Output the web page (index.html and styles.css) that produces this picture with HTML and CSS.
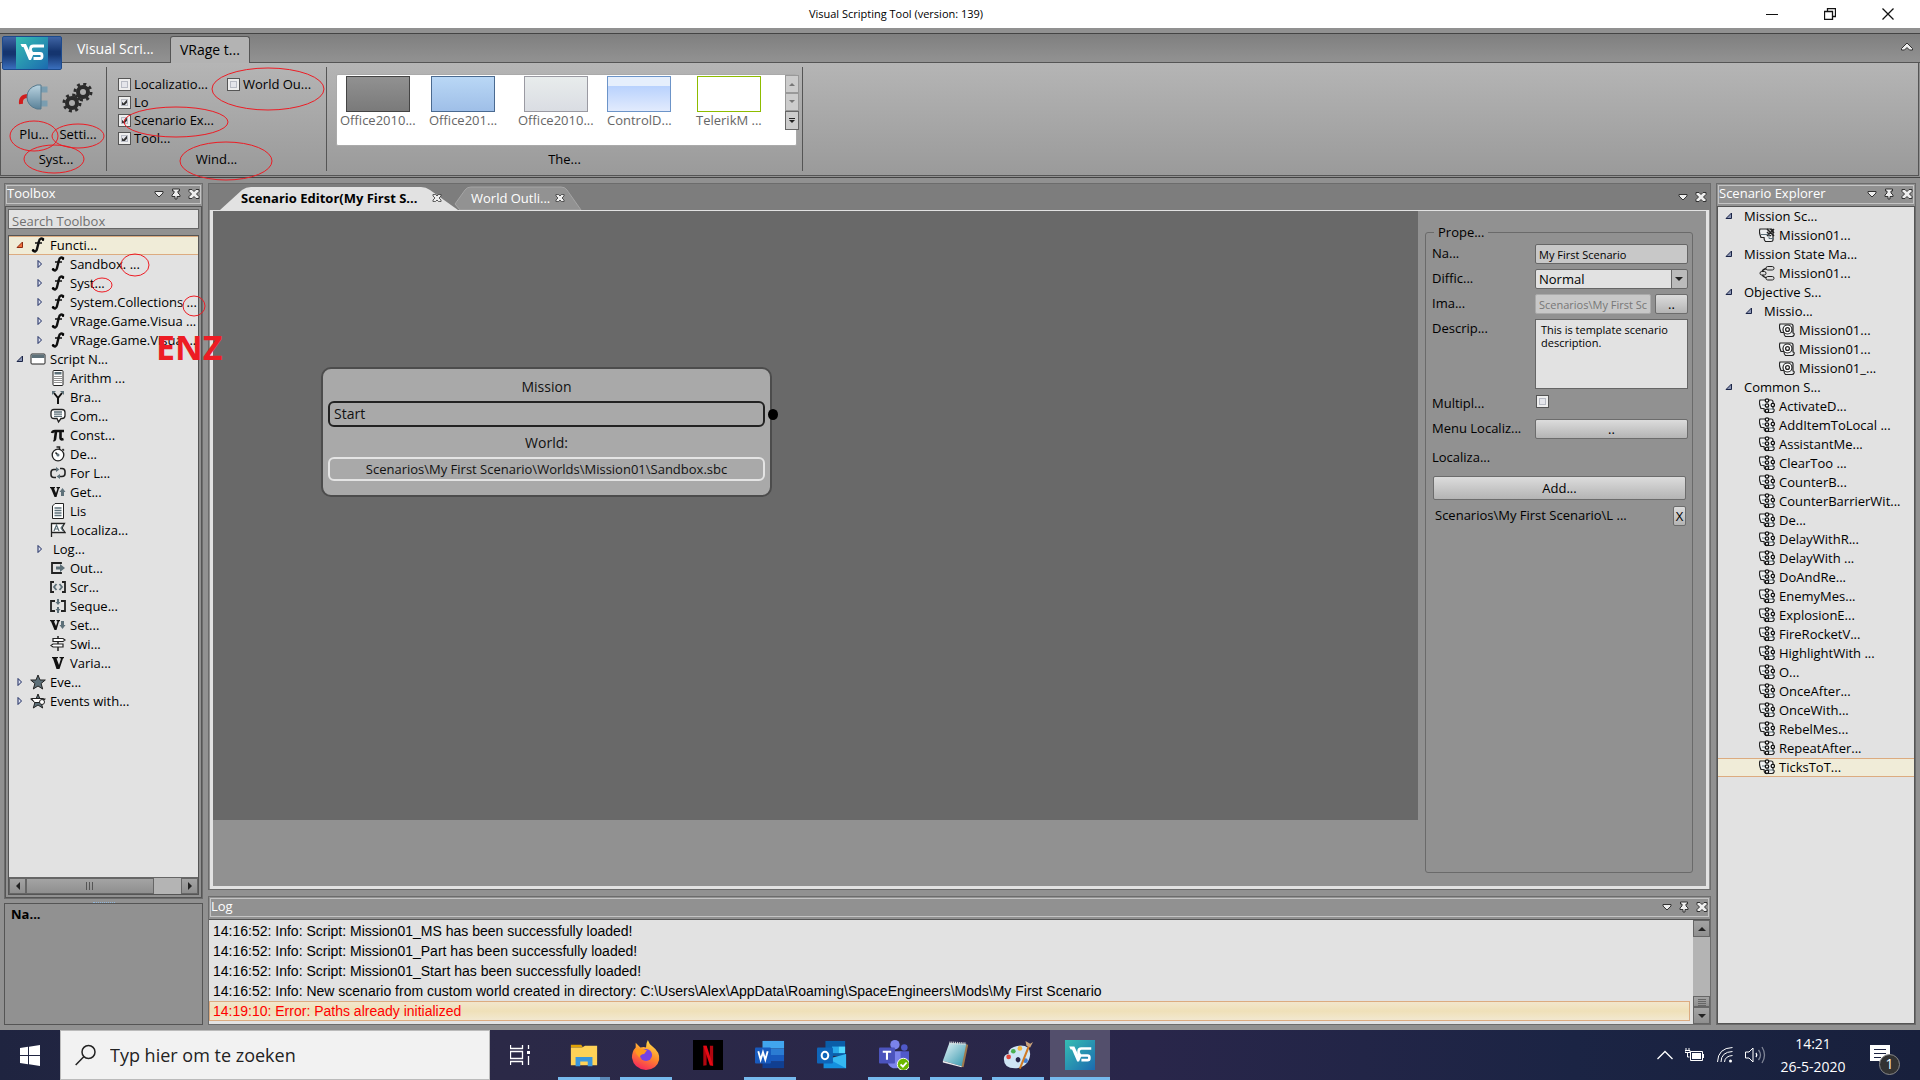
FILE: index.html
```html
<!DOCTYPE html>
<html lang="en">
<head>
<meta charset="utf-8">
<title>Visual Scripting Tool</title>
<link rel="stylesheet" href="styles.css">
</head>
<body>
<svg class="defs" aria-hidden="true">
  <defs>
    <linearGradient id="vsg" x1="0" y1="0" x2="1" y2="1"><stop offset="0" stop-color="#35bdb2"/><stop offset="1" stop-color="#1c6bb0"/></linearGradient>
    <linearGradient id="ffg" x1="0.7" y1="0" x2="0.3" y2="1"><stop offset="0" stop-color="#ffe14a"/><stop offset="0.5" stop-color="#ff8a2a"/><stop offset="1" stop-color="#f5225f"/></linearGradient>
    <linearGradient id="ntg" x1="0" y1="0" x2="1" y2="1"><stop offset="0" stop-color="#e6f5f8"/><stop offset="1" stop-color="#2f94ab"/></linearGradient>
    <linearGradient id="plg" x1="0" y1="0" x2="0" y2="1"><stop offset="0" stop-color="#b9d3e0"/><stop offset="1" stop-color="#5b8299"/></linearGradient>
  </defs>
  <symbol id="vs" viewBox="0 0 32 32"><rect width="32" height="32" fill="url(#vsg)"/><path d="M4.500 7H10l4.500 9.500L16 13l1.500 4-2.500 6h-2L7.500 10H6z" fill="#fff"/><path d="M28 9H17.500q-3 0-3 3v1.500q0 3 3 3H24q2 0 2 2v1q0 2-2 2h-6.500" fill="none" stroke="#fff" stroke-width="2.800"/></symbol>
  <symbol id="down" viewBox="0 0 10 10"><path d="M1 2.500h8v1.500L5 8 1 4z" fill="#eee" stroke="#333"/></symbol>
  <symbol id="pin" viewBox="0 0 10 12"><path d="M1.500 1h7v2H7v2l2 2v1.500H6v2.500H4V8.500H1V7l2-2V3H1.500z" fill="#eee" stroke="#333"/></symbol>
  <symbol id="close" viewBox="0 0 12 10"><path d="M1 .5h3l2 2 2-2h3v2L8.500 5 11 7.500v2H8l-2-2-2 2H1v-2L3.500 5 1 2.500z" fill="#eee" stroke="#333"/></symbol>
  <symbol id="open" viewBox="0 0 8 8"><path d="M6.500 1v5.500H1z" fill="#8d97b5" stroke="#1a2447"/></symbol>
  <symbol id="openred" viewBox="0 0 8 8"><path d="M6.500 1v5.500H1z" fill="#f0703a" stroke="#8e2a12"/></symbol>
  <symbol id="shut" viewBox="0 0 8 8"><path d="M2 .5v7L5.500 4z" fill="#dfe3f2" stroke="#16245c"/></symbol>
  <symbol id="fn" viewBox="0 0 16 16"><path d="M13.500 2.500C12 .5 9.500 1.500 9 4L7 12c-.5 2.500-2.500 3.200-4 1.500" fill="none" stroke="#111" stroke-width="2.400"/><path d="M5 6h7" stroke="#111" stroke-width="1.500"/><circle cx="13" cy="2.700" r="1.200"/><circle cx="3.200" cy="13.300" r="1.300"/></symbol>
  <symbol id="window" viewBox="0 0 16 16"><rect x="1" y="3" width="14" height="10" rx="1" fill="#fff" stroke="#222"/><path d="M1.500 3.500h13V7h-13z" fill="#5d7079"/></symbol>
  <symbol id="calc" viewBox="0 0 16 16"><rect x="3" y=".5" width="10" height="15" rx="1" fill="#fff" stroke="#222"/><path d="M4.500 2h7v2.500h-7z" fill="#5d7079"/><path d="M5 6v8M7 6v8M9 6v8M11 6v8" stroke="#222" stroke-dasharray="1 1"/></symbol>
  <symbol id="branch" viewBox="0 0 16 16"><path d="M8 15V9L4 4M8 9l4-5" fill="none" stroke="#111" stroke-width="2"/><path d="M2 2h4L2 6zM14 2h-4l4 4z" fill="#5d7079"/></symbol>
  <symbol id="comment" viewBox="0 0 16 16"><path d="M4 1.500h8q3 0 3 3v3q0 3-3 3h-1L8.500 14 7 10.500H4q-3 0-3-3v-3q0-3 3-3z" fill="#fff" stroke="#222" stroke-width="1.300"/><path d="M4 4h8M4 6.200h8M4 8.400h8" stroke="#5d7079" stroke-width="1.300"/></symbol>
  <symbol id="pi" viewBox="0 0 16 16"><path d="M2 6q.5-2 3-2h9M6 4.500 5 12q-.3 1.500-1.500 1M10.500 4.500V11q0 2 3 1" fill="none" stroke="#111" stroke-width="2.600"/></symbol>
  <symbol id="timer" viewBox="0 0 16 16"><circle cx="8" cy="9" r="5.800" fill="#fff" stroke="#222" stroke-width="1.300"/><path d="M6.500 1h3v2M12.500 3l1.500 1.500M8 9 5.500 6.500" stroke="#222" stroke-width="1.500" fill="none"/><circle cx="8" cy="9" r="1.500" fill="#5d7079"/></symbol>
  <symbol id="loop" viewBox="0 0 16 16"><path d="M6 12.500H4q-3 0-3-3v-2q0-3 3-3h3M10 3.500h2q3 0 3 3v2q0 3-3 3H9" fill="none" stroke="#222" stroke-width="1.600"/><path d="M6 2l3.500 2.500L6 7zM10 9l-3.500 2.500L10 14z" fill="#5d7079"/></symbol>
  <symbol id="getv" viewBox="0 0 16 16"><path d="M0 3h5v1l-1 .5L6 9l1.500-4.500L6.500 4V3h3.500v1l-1 .5L6.500 13h-2L1 4.500 0 4z" fill="#111"/><path d="M12.500 4l3 4H14v4h-3V8H9.500z" fill="#5d7079"/></symbol>
  <symbol id="setv" viewBox="0 0 16 16"><path d="M0 3h5v1l-1 .5L6 9l1.500-4.500L6.500 4V3h3.500v1l-1 .5L6.500 13h-2L1 4.500 0 4z" fill="#111"/><path d="M12.500 12l3-4H14V4h-3v4H9.500z" fill="#5d7079"/></symbol>
  <symbol id="vee" viewBox="0 0 16 16"><path d="M2 2h6v1l-1.500.5L9 10l2-6.500L9.500 3V2H14v1l-1 .5L9.500 14h-3L3 3.500 2 3z" fill="#111"/></symbol>
  <symbol id="list" viewBox="0 0 16 16"><path d="M5 .5h8.500v15h-11V3z" fill="#fff" stroke="#222"/><path d="M4.500 5h7M4.500 7.500h7M4.500 10h7M4.500 12.500h7" stroke="#5d7079" stroke-width="1.300"/></symbol>
  <symbol id="flag" viewBox="0 0 16 16"><path d="M1.500 15V1.500h13L12 6l3 4.500H1.500" fill="#fff" stroke="#222" stroke-width="1.300"/><path d="M4 9l2.500-6L9 9M5 7h3M13 3l-2 3 2 3" fill="none" stroke="#5d7079" stroke-width="1.200"/></symbol>
  <symbol id="out" viewBox="0 0 16 16"><path d="M11 4V3H2v10h9v-1" fill="none" stroke="#222" stroke-width="1.800"/><path d="M6 6.500h4V4l5 4-5 4V9.500H6z" fill="#5d7079"/></symbol>
  <symbol id="script" viewBox="0 0 16 16"><path d="M4 3H1v10h3M12 3h3v10h-3" fill="none" stroke="#222" stroke-width="1.800"/><path d="M6.500 5 4 8l2.500 3M9.500 5 12 8l-2.500 3" fill="none" stroke="#5d7079" stroke-width="1.800"/></symbol>
  <symbol id="seq" viewBox="0 0 16 16"><path d="M5 3H1v10h4M11 3h4v10h-4" fill="none" stroke="#222" stroke-width="1.800"/><path d="M8 1v5M8 9v6" stroke="#5d7079" stroke-width="2"/><path d="M5.500 4h5L8 7zM5.500 11h5L8 14z" fill="#5d7079"/></symbol>
  <symbol id="switch" viewBox="0 0 16 16"><path d="M8 0v15" stroke="#222" stroke-width="1.500"/><path d="M3 2.500h10l2 1.500-2 1.500H3zM13 8H3L1 9.500 3 11h10z" fill="#fff" stroke="#222" stroke-width="1.200"/></symbol>
  <symbol id="star" viewBox="0 0 16 16"><path d="M8 1l2 5h5.300l-4.200 3.500 1.600 5.500L8 12l-4.700 3 1.600-5.500L.7 6H6z" fill="#5d7079" stroke="#222"/></symbol>
  <symbol id="stark" viewBox="0 0 16 16"><path d="M8 1l2 5h5.300l-4.200 3.500 1.600 5.500L8 12l-4.700 3 1.600-5.500L.7 6H6z" fill="#5d7079" stroke="#222"/><path d="M1.500 5.500h12v4h-9z" fill="#fff" stroke="#222"/><circle cx="12" cy="9" r="2.500" fill="#fff" stroke="#222"/></symbol>
  <symbol id="mscript" viewBox="0 0 16 16"><path d="M1 2h11q2 0 2 2v9q0 1.500-2 1.500H6.500q-1.500-1-1.500-4H2Q-.5 5 1 2z" fill="#eceeef" stroke="#222" stroke-width="1.200"/><path d="M2 7.500h8v4h5" fill="none" stroke="#5d7079"/><path d="M8 2l7 7M15 2L8 9M11.500 2l3.500 4M8 5l4 4" stroke="#222" stroke-width="1.500"/></symbol>
  <symbol id="obj" viewBox="0 0 16 16"><path d="M1 2h11q2 0 2 2v7q1.500 0 1 2-.500 1.500-2 1.500H6.500q-1.500-1-1.500-4H2Q-.5 5 1 2z" fill="#eceeef" stroke="#222" stroke-width="1.200"/><circle cx="8.500" cy="7.500" r="4.500" fill="#fff" stroke="#222" stroke-width="1.200"/><circle cx="8.500" cy="7.500" r="1.900" fill="#fff" stroke="#222" stroke-width="1.300"/></symbol>
  <symbol id="common" viewBox="0 0 16 16"><path d="M1 2h11q2 0 2 2v7q1.500 0 1 2-.500 1.500-2 1.500H6.500q-1.500-1-1.500-4H2Q-.5 5 1 2z" fill="#f2f3f4" stroke="#222" stroke-width="1.200"/><path d="M3 7h6v4h6" fill="none" stroke="#5d7079"/><g fill="#fff" stroke="#111" stroke-width="1.300"><circle cx="8" cy="2.500" r="1.700"/><circle cx="13.800" cy="7" r="1.700"/><circle cx="8" cy="12.800" r="1.700"/><circle cx="8" cy="7.500" r="1.700"/></g></symbol>
  <symbol id="state" viewBox="0 0 16 16"><path d="M8 3.500Q3 4 3 8t5 5" fill="none" stroke="#222" stroke-width="1.300"/><rect x="7" y="1.500" width="8" height="3.500" rx="1.700" fill="#ddd" stroke="#222"/><rect x="1" y="6.500" width="6" height="3.500" rx="1.700" fill="#ddd" stroke="#222"/><rect x="7" y="11.500" width="8" height="3.500" rx="1.700" fill="#ddd" stroke="#222"/></symbol>
</svg>

<header class="titlebar">
  <span class="title">Visual Scripting Tool (version: 139)</span>
  <div class="wincontrols">
    <button aria-label="Minimize"><svg width="12" height="12"><path d="M0 6.500h12" stroke="#111"/></svg></button>
    <button aria-label="Restore"><svg width="12" height="12"><path d="M.5 3.500h8v8h-8zM3.500 3V.5h8v8H9" fill="none" stroke="#111" stroke-width="1.300"/></svg></button>
    <button aria-label="Close"><svg width="12" height="12"><path d="M.5.5l11 11M11.500.5l-11 11" stroke="#111" stroke-width="1.300"/></svg></button>
  </div>
</header>

<nav class="tabs">
  <button class="appbtn" aria-label="Application menu"><svg width="32" height="32"><use href="#vs"/></svg></button>
  <button class="rtab">Visual Scri...</button>
  <button class="rtab active">VRage t...</button>
  <button class="collapse" aria-label="Collapse ribbon"><svg width="12" height="9"><path d="M.5 6.500 6 1l5.500 5.500V8H8.500L6 5.500 3.500 8h-3z" fill="#eee" stroke="#333"/></svg></button>
</nav>

<section class="ribbon">
  <div class="group sys">
    <div class="tools">
      <button class="tool">
        <svg width="32" height="30"><path d="M3 21q-1-8 7-8" fill="none" stroke="#d21c1c" stroke-width="4"/><path d="M20 5h8v3h-7M20 19h8v3h-7" fill="none" stroke="#7a9db0" stroke-width="3"/><path d="M19 2h4v24h-4Q9 23 9 14T19 2z" fill="url(#plg)" stroke="#54788c"/></svg>
        <span>Plu...</span></button>
      <button class="tool">
        <svg width="32" height="30"><g fill="none" stroke="#2b2b2b"><circle cx="21" cy="9" r="5" stroke-width="4"/><circle cx="21" cy="9" r="8" stroke-width="3" stroke-dasharray="3 3.280"/><circle cx="10" cy="20" r="5" stroke-width="4"/><circle cx="10" cy="20" r="8" stroke-width="3" stroke-dasharray="3 3.280"/></g></svg>
        <span>Setti...</span></button>
    </div>
    <div class="caption">Syst...</div>
  </div>
  <div class="group win">
    <div class="checks">
      <label><input type="checkbox">Localizatio...</label>
      <label><input type="checkbox" checked>Lo</label>
      <label><input type="checkbox" checked>Scenario Ex...</label>
      <label><input type="checkbox" checked>Tool...</label>
      <label><input type="checkbox">World Ou...</label>
    </div>
    <div class="caption">Wind...</div>
  </div>
  <div class="group themes">
    <div class="gallery">
      <div class="themelist">
        <button><i class="sw black"></i>Office2010...</button>
        <button><i class="sw blue"></i>Office201...</button>
        <button><i class="sw silver"></i>Office2010...</button>
        <button><i class="sw ctrl"></i>ControlD...</button>
        <button><i class="sw metro"></i>TelerikM ...</button>
      </div>
      <div class="gscroll">
        <button aria-label="Up"><svg width="8" height="6"><path d="M1 5h6L4 2z" fill="#777"/></svg></button>
        <button aria-label="Down"><svg width="8" height="6"><path d="M1 1h6L4 4z" fill="#777"/></svg></button>
        <button class="on" aria-label="More"><svg width="8" height="8"><path d="M1 1.500h6" stroke="#222"/><path d="M1 3h6L4 6z" fill="#222"/></svg></button>
      </div>
    </div>
    <div class="caption">The...</div>
  </div>
</section>

<main class="work">
  <aside class="left">
    <section class="panel toolbox">
      <div class="head"><h2>Toolbox</h2><svg><use href="#down"/></svg><svg><use href="#pin"/></svg><svg><use href="#close"/></svg></div>
      <div class="tbody">
        <input class="search" type="text" placeholder="Search Toolbox" aria-label="Search Toolbox">
        <div class="treebox">
          <ul class="tree">
            <li class="sel"><svg class="ar"><use href="#openred"/></svg><svg><use href="#fn"/></svg>Functi...</li>
            <li class="l1"><svg class="ar"><use href="#shut"/></svg><svg><use href="#fn"/></svg>Sandbox. ...</li>
            <li class="l1"><svg class="ar"><use href="#shut"/></svg><svg><use href="#fn"/></svg>Syst...</li>
            <li class="l1"><svg class="ar"><use href="#shut"/></svg><svg><use href="#fn"/></svg>System.Collections ...</li>
            <li class="l1"><svg class="ar"><use href="#shut"/></svg><svg><use href="#fn"/></svg>VRage.Game.Visua ...</li>
            <li class="l1"><svg class="ar"><use href="#shut"/></svg><svg><use href="#fn"/></svg>VRage.Game.Visua ...</li>
            <li><svg class="ar"><use href="#open"/></svg><svg><use href="#window"/></svg>Script N...</li>
            <li class="l2"><svg><use href="#calc"/></svg>Arithm ...</li>
            <li class="l2"><svg><use href="#branch"/></svg>Bra...</li>
            <li class="l2"><svg><use href="#comment"/></svg>Com...</li>
            <li class="l2"><svg><use href="#pi"/></svg>Const...</li>
            <li class="l2"><svg><use href="#timer"/></svg>De...</li>
            <li class="l2"><svg><use href="#loop"/></svg>For L...</li>
            <li class="l2"><svg><use href="#getv"/></svg>Get...</li>
            <li class="l2"><svg><use href="#list"/></svg>Lis</li>
            <li class="l2"><svg><use href="#flag"/></svg>Localiza...</li>
            <li class="l1"><svg class="ar"><use href="#shut"/></svg>Log...</li>
            <li class="l2"><svg><use href="#out"/></svg>Out...</li>
            <li class="l2"><svg><use href="#script"/></svg>Scr...</li>
            <li class="l2"><svg><use href="#seq"/></svg>Seque...</li>
            <li class="l2"><svg><use href="#setv"/></svg>Set...</li>
            <li class="l2"><svg><use href="#switch"/></svg>Swi...</li>
            <li class="l2"><svg><use href="#vee"/></svg>Varia...</li>
            <li><svg class="ar"><use href="#shut"/></svg><svg><use href="#star"/></svg>Eve...</li>
            <li><svg class="ar"><use href="#shut"/></svg><svg><use href="#stark"/></svg>Events with...</li>
          </ul>
          <div class="hscroll">
            <button aria-label="Scroll left"><svg width="6" height="8"><path d="M5 0v8L1 4z" fill="#222"/></svg></button>
            <div class="thumb"><svg width="10" height="8"><path d="M1.500 0v8M4.500 0v8M7.500 0v8" stroke="#555"/></svg></div>
            <button aria-label="Scroll right"><svg width="6" height="8"><path d="M1 0v8l4-4z" fill="#222"/></svg></button>
          </div>
        </div>
      </div>
    </section>
    <div class="grip"></div>
    <section class="names">Na...</section>
  </aside>

  <div class="center">
    <section class="editor">
      <div class="doctabs">
        <div class="dtab first"><svg class="shape" viewBox="0 0 238 24"><path d="M0 24 22 4Q26 1 31 1H201Q206 1 210 4L238 24z" fill="#e2e2e2"/></svg><span>Scenario Editor(My First S...</span><button aria-label="Close tab"><svg><use href="#close"/></svg></button></div>
        <div class="dtab second"><svg class="shape" viewBox="0 0 128 24"><path d="M1 18 11 4Q13 1 17 1H107Q111 1 113 4L127 24H6z" fill="#929292" stroke="#a5a5a5"/></svg><span>World Outli...</span><button aria-label="Close tab"><svg><use href="#close"/></svg></button></div>
        <div class="dend"><svg width="10" height="12"><use href="#down"/></svg><svg width="12" height="12"><use href="#close"/></svg></div>
      </div>
      <div class="doc">
        <div class="canvas">
          <div class="node">
            <div class="ntext">Mission</div>
            <div class="nstart">Start<i class="port"></i></div>
            <div class="ntext">World:</div>
            <button class="npath">Scenarios\My First Scenario\Worlds\Mission01\Sandbox.sbc</button>
          </div>
        </div>
        <form class="props">
          <fieldset>
            <legend>Prope...</legend>
            <div class="grid">
              <label for="nm">Na...</label><input id="nm" type="text" value="My First Scenario">
              <label for="df">Diffic...</label><select id="df"><option>Normal</option></select>
              <label for="im">Ima...</label><div class="pair"><input id="im" type="text" value="Scenarios\My First Scenario" disabled><button type="button">..</button></div>
              <label for="ds">Descrip...</label><textarea id="ds">This is template scenario description.</textarea>
              <label for="mp">Multipl...</label><input id="mp" type="checkbox">
              <label for="ml">Menu Localiz...</label><button id="ml" type="button">..</button>
            </div>
            <div class="loc">Localiza...</div>
            <button class="add" type="button">Add...</button>
            <div class="file"><span>Scenarios\My First Scenario\L ...</span><button type="button">X</button></div>
          </fieldset>
        </form>
      </div>
    </section>
    <section class="panel log">
      <div class="head"><h2>Log</h2><svg><use href="#down"/></svg><svg><use href="#pin"/></svg><svg><use href="#close"/></svg></div>
      <div class="logbody">
        <ul>
          <li>14:16:52: Info: Script: Mission01_MS has been successfully loaded!</li>
          <li>14:16:52: Info: Script: Mission01_Part has been successfully loaded!</li>
          <li>14:16:52: Info: Script: Mission01_Start has been successfully loaded!</li>
          <li>14:16:52: Info: New scenario from custom world created in directory: C:\Users\Alex\AppData\Roaming\SpaceEngineers\Mods\My First Scenario</li>
          <li class="err">14:19:10: Error: Paths already initialized</li>
        </ul>
        <div class="vscroll">
          <button aria-label="Scroll up"><svg width="8" height="6"><path d="M0 5h8L4 1z" fill="#222"/></svg></button>
          <div class="thumb"><svg width="8" height="8"><path d="M0 1.500h8M0 3.500h8M0 5.500h8M0 7.500h8" stroke="#666"/></svg></div>
          <button aria-label="Scroll down"><svg width="8" height="6"><path d="M0 1h8L4 5z" fill="#222"/></svg></button>
        </div>
      </div>
    </section>
  </div>

  <aside class="panel explorer">
    <div class="head"><h2>Scenario Explorer</h2><svg><use href="#down"/></svg><svg><use href="#pin"/></svg><svg><use href="#close"/></svg></div>
    <ul class="tree">
      <li><svg class="ar"><use href="#open"/></svg>Mission Sc...</li>
      <li class="l2"><svg><use href="#mscript"/></svg>Mission01...</li>
      <li><svg class="ar"><use href="#open"/></svg>Mission State Ma...</li>
      <li class="l2"><svg><use href="#state"/></svg>Mission01...</li>
      <li><svg class="ar"><use href="#open"/></svg>Objective S...</li>
      <li class="l1"><svg class="ar"><use href="#open"/></svg>Missio...</li>
      <li class="l3"><svg><use href="#obj"/></svg>Mission01...</li>
      <li class="l3"><svg><use href="#obj"/></svg>Mission01...</li>
      <li class="l3"><svg><use href="#obj"/></svg>Mission01_...</li>
      <li><svg class="ar"><use href="#open"/></svg>Common S...</li>
      <li class="l2"><svg><use href="#common"/></svg>ActivateD...</li>
      <li class="l2"><svg><use href="#common"/></svg>AddItemToLocal ...</li>
      <li class="l2"><svg><use href="#common"/></svg>AssistantMe...</li>
      <li class="l2"><svg><use href="#common"/></svg>ClearToo ...</li>
      <li class="l2"><svg><use href="#common"/></svg>CounterB...</li>
      <li class="l2"><svg><use href="#common"/></svg>CounterBarrierWit...</li>
      <li class="l2"><svg><use href="#common"/></svg>De...</li>
      <li class="l2"><svg><use href="#common"/></svg>DelayWithR...</li>
      <li class="l2"><svg><use href="#common"/></svg>DelayWith ...</li>
      <li class="l2"><svg><use href="#common"/></svg>DoAndRe...</li>
      <li class="l2"><svg><use href="#common"/></svg>EnemyMes...</li>
      <li class="l2"><svg><use href="#common"/></svg>ExplosionE...</li>
      <li class="l2"><svg><use href="#common"/></svg>FireRocketV...</li>
      <li class="l2"><svg><use href="#common"/></svg>HighlightWith ...</li>
      <li class="l2"><svg><use href="#common"/></svg>O...</li>
      <li class="l2"><svg><use href="#common"/></svg>OnceAfter...</li>
      <li class="l2"><svg><use href="#common"/></svg>OnceWith...</li>
      <li class="l2"><svg><use href="#common"/></svg>RebelMes...</li>
      <li class="l2"><svg><use href="#common"/></svg>RepeatAfter...</li>
      <li class="l2 sel"><svg><use href="#common"/></svg>TicksToT...</li>
    </ul>
  </aside>
</main>

<footer class="taskbar">
  <button class="start" aria-label="Start"><svg width="20" height="21"><path d="M0 3l8-1.200V10H0zM9 1.700 20 0v10H9zM0 11h8v8.200L0 18zM9 11h11v10L9 19.300z" fill="#fff"/></svg></button>
  <label class="tsearch"><svg width="22" height="22"><circle cx="13.500" cy="8" r="6.500" fill="none" stroke="#222" stroke-width="1.500"/><path d="M9 12.500.7 21" stroke="#222" stroke-width="1.500"/></svg><input type="text" placeholder="Typ hier om te zoeken" aria-label="Typ hier om te zoeken"></label>
  <button class="tv" aria-label="Task view"><svg width="20" height="20"><path d="M.5 0v3.500h12V0M.5 6.500h12v7H.500zM.5 20v-3.500h12V20M18.500 0v4M18.500 11v9" fill="none" stroke="#fff" stroke-width="1.300"/><path d="M17 6h3v3h-3z" fill="#fff"/></svg></button>
  <div class="apps">
    <button class="run stack" aria-label="Explorer"><svg viewBox="0 0 32 32"><path d="M2 5h11l2 3H2z" fill="#e0a106"/><path d="M2 8h12l3-2h13v21H2z" fill="#ffd257"/><path d="M7 28V18h18v10h-5v-5h-8v5z" fill="#3a96dd"/></svg></button>
    <button class="run" aria-label="Firefox"><svg viewBox="0 0 32 32"><path d="M18 0q1 4 5 7 8 6 7 14-2 10-14 11Q3 31 1 19 1 12 5 8V3l5 5q4-1 6 0 0-5 2-8z" fill="url(#ffg)"/><circle cx="16" cy="16" r="6.500" fill="#7542e5"/><path d="M4 10l6-1 7 2-3 4q-4 0-5 4-4-4-5-9z" fill="#ff9a1f"/></svg></button>
    <button aria-label="Netflix"><svg viewBox="0 0 32 32"><path d="M0 0h32v32H0z"/><path d="M11 6h3.500v21l-3.500.5zM18 6h3.500v21.500L18 27z" fill="#b1060f"/><path d="M11 6h3.500l7 21.500L18 27z" fill="#e50914"/></svg></button>
    <button class="run" aria-label="Word"><svg viewBox="0 0 32 32"><path d="M8 1h23v8H8z" fill="#41a5ee"/><path d="M8 9h23v7H8z" fill="#2b7cd3"/><path d="M8 16h23v7H8z" fill="#185abd"/><path d="M8 23h23v7H8z" fill="#103f91"/><rect y="8" width="17" height="17" rx="1" fill="#185abd"/><path d="M3.500 12l2.500 9 2.500-8 2.500 8 2.500-9" fill="none" stroke="#fff" stroke-width="2"/></svg></button>
    <button aria-label="Outlook"><svg viewBox="0 0 32 32"><path d="M9 1h21v16H9z" fill="#0a5ea8"/><path d="M16 7h7v7h-7z" fill="#28a8ea"/><path d="M23 7h7v7h-7z" fill="#50d9ff"/><path d="M7 15l12 7 12-7v15H7z" fill="#1490df"/><path d="M31 15v15L12 20z" fill="#35b8f1"/><rect y="8" width="17" height="17" rx="1" fill="#0f65b8"/><ellipse cx="8.500" cy="16.500" rx="3.500" ry="4" fill="none" stroke="#fff" stroke-width="2.200"/></svg></button>
    <button class="run" aria-label="Teams"><svg viewBox="0 0 32 32"><circle cx="17" cy="5" r="5" fill="#7b83eb"/><circle cx="27" cy="8" r="3.500" fill="#5059c9"/><path d="M9 12h15v14q-3 5-9 4-6-2-6-8z" fill="#7b83eb"/><path d="M23 12h9v10q-2 6-9 4z" fill="#5059c9"/><rect y="8" width="17" height="17" rx="1" fill="#4b53bc"/><path d="M4 12.500h9M8.500 12v9" stroke="#fff" stroke-width="2.200"/><circle cx="26" cy="26" r="6.500" fill="#6bb700" stroke="#fff"/><path d="M23 26l2.500 2.500L29.500 24" fill="none" stroke="#fff" stroke-width="2"/></svg></button>
    <button class="run" aria-label="Notepad"><svg viewBox="0 0 32 32"><path d="M24 4l5 1-5 24-4-1z" fill="#a0794b"/><path d="M9 3l18 1-5 24L2 22z" fill="url(#ntg)"/><path d="M9 3l18 1" stroke="#ddd" stroke-width="3" stroke-dasharray="1 1"/><path d="M2 22l20 6v1L2 24z" fill="#eee"/></svg></button>
    <button class="run" aria-label="Paint"><svg viewBox="0 0 32 32"><path d="M17 6q12-1 12 9-1 13-14 15Q0 31 1 19q1-4 5-4Q5 8 17 6zm-1 12a2.500 3 0 1 0 .1 0z" fill="#cfe5f4"/><circle cx="11" cy="12" r="2.500" fill="#4bb04f"/><circle cx="18" cy="9" r="2.500" fill="#f4b63b"/><circle cx="6" cy="18" r="2.500" fill="#e2463b"/><circle cx="24" cy="22" r="2.500" fill="#3f7fd6"/><path d="M27 5l2 1-10 25-2-1z" fill="#cf7a24"/><path d="M24 1l5 3 3-2-3 6-4-2z" fill="#c9a27b"/></svg></button>
    <button class="run cur" aria-label="Visual Scripting Tool"><svg><use href="#vs"/></svg></button>
  </div>
  <div class="tray">
    <svg width="16" height="10"><path d="M.5 9 8 1.500 15.500 9" fill="none" stroke="#fff" stroke-width="1.300"/></svg>
    <svg width="20" height="14"><path d="M5.500 3.500h12v9h-12zM18.500 6v4" fill="none" stroke="#fff"/><path d="M7 5h9v6H7z" fill="#fff"/><path d="M1 0v2M4 0v2M0 2.500h5v2H0zM2.500 5v4h2" fill="none" stroke="#fff"/></svg>
    <svg width="16" height="16"><g fill="none" stroke="#fff"><path d="M.5 15Q1 1 15.500.5M4 15Q4 5 15.500 4.500M7.500 15Q8 9 15.500 8.500"/></g><circle cx="13.500" cy="14" r="1.500" fill="#fff"/></svg>
    <svg width="22" height="18"><path d="M.5 6v6H4l4 4V2L4 6z" fill="none" stroke="#fff"/><path d="M11 7q1.500 2 0 4" fill="none" stroke="#fff" stroke-width="1.300"/><path d="M13.500 4q4 5 0 10M17 1q5 8 0 16" fill="none" stroke="#7f8596" stroke-width="1.300"/></svg>
    <div class="clock"><span>14:21</span><span>26-5-2020</span></div>
    <button class="notes" aria-label="Notifications"><svg width="20" height="20"><path d="M0 0h20v16h-8v3l-3-3H0z" fill="#fff"/><path d="M4 4.500h12M4 8.500h12M4 12.500h7" stroke="#1a2140"/></svg><b>1</b></button>
  </div>
</footer>

<svg class="marks" width="230" height="380" aria-hidden="true">
  <g fill="none" stroke="#ed1c24">
    <ellipse cx="34" cy="136" rx="24" ry="15"/><ellipse cx="78" cy="136" rx="26" ry="12"/><ellipse cx="54" cy="159" rx="30" ry="14"/>
    <ellipse cx="176" cy="122" rx="52" ry="15"/><ellipse cx="226" cy="161" rx="46" ry="19"/><ellipse cx="268" cy="89" rx="56" ry="21"/>
    <ellipse cx="135" cy="265" rx="14" ry="11"/><ellipse cx="102" cy="285" rx="10" ry="7"/><ellipse cx="194" cy="306" rx="11" ry="10"/>
  </g>
  <text x="156" y="360">ENZ</text>
</svg>
</body>
</html>
```
FILE: styles.css
```css
* { box-sizing: border-box; }
body { margin: 0; height: 100vh; min-height: 700px; display: flex; flex-direction: column; background: #919191; font-family: "Open Sans", "Noto Sans", sans-serif; font-size: 13px; line-height: 18px; color: #000; position: relative; overflow: hidden; }
button, input, select, textarea { font: inherit; color: inherit; margin: 0; }
button { border: 0; padding: 0; background: none; }
ul, h2, fieldset { margin: 0; padding: 0; }
ul { list-style: none; }
svg { display: block; flex: none; }
.defs { position: absolute; width: 0; height: 0; }
.marks { position: absolute; left: 0; top: 0; overflow: visible; pointer-events: none; }
.marks text { font-weight: 700; font-size: 34px; fill: #ed1c24; }

.titlebar { background: #fff; height: 28px; display: grid; grid-template-columns: 1fr auto 1fr; align-items: center; font-size: 11px; padding-right: 26px; flex: none; }
.title { grid-column: 2; margin-right: 102px; }
.wincontrols { display: flex; justify-content: flex-end; gap: 46px; }

.tabs { margin-top: 5px; height: 30px; flex: none; display: flex; align-items: flex-end; background: linear-gradient(#7f7f7f, #929292); border-top: 1px solid #444; border-bottom: 1px solid #555; padding-left: 2px; font-size: 14px; }
.appbtn { width: 60px; height: 34px; align-self: flex-start; margin-top: 2px; display: flex; justify-content: center; border: 1px solid #1d4a8c; border-radius: 2px; background: linear-gradient(#3f64a4, #15356f 45%, #15356f 55%, #3a6fbd); z-index: 1; }
.rtab { height: 26px; color: #fff; width: 108px; padding-left: 15px; text-align: left; }
.rtab.active { width: 80px; height: 27px; margin-bottom: -1px; padding-left: 9px; color: #000; background: #b3b3b3; border: 1px solid #555; border-bottom: 0; border-radius: 3px 3px 0 0; }
.collapse { margin: 0 7px 0 auto; align-self: center; padding-bottom: 3px; }

.ribbon { height: 113px; flex: none; display: flex; padding: 4px 0 4px 1px; margin-right: 1px; background: linear-gradient(#b5b5b5, #9a9a9a); border: 1px solid #555; border-top: 0; }
.group { border-right: 1px solid #555; display: flex; flex-direction: column; justify-content: space-between; }
.caption { text-align: center; line-height: 20px; padding-bottom: 2px; }
.sys { width: 105px; padding-right: 0; }
.sys .caption { padding-left: 4px; }
.win { width: 220px; }
.themes { width: 476px; }
.tools { display: flex; padding: 16px 0 0 13px; gap: 6px; }
.tool { width: 38px; display: flex; flex-direction: column; align-items: center; gap: 12px; white-space: nowrap; }
.checks { display: grid; grid-auto-flow: column; grid-template-rows: repeat(4, 18px); grid-template-columns: 109px 1fr; padding: 8px 0 0 11px; }
.checks label { display: flex; align-items: center; gap: 3px; white-space: nowrap; }
input[type="checkbox"] { appearance: none; width: 13px; height: 13px; border: 1px solid #555; background: #e4e5ea; box-shadow: inset 0 0 0 2px #eee, inset 0 0 0 3px #b8bbc4; }
input[type="checkbox"]:checked { background: #e4e5ea url("data:image/svg+xml,%3Csvg xmlns='http://www.w3.org/2000/svg' viewBox='0 0 11 11'%3E%3Cpath d='M2.500 5.500l2 2.500L9 3' fill='none' stroke='%23333' stroke-width='2'/%3E%3C/svg%3E"); }
.gallery { margin: 7px 5px 0 9px; height: 72px; background: #fff; border: 1px solid #aaa; border-radius: 2px; display: flex; justify-content: space-between; }
.themelist { display: grid; grid-template-columns: repeat(5, 89px); justify-items: start; padding: 1px 0 0 3px; }
.themelist button { display: flex; flex-direction: column; justify-content: flex-start; align-items: center; color: #666; line-height: 16px; white-space: nowrap; }
.sw { width: 64px; height: 36px; border: 1px solid #444; }
.black { background: linear-gradient(#919191, #7a7a7a); }
.blue { background: linear-gradient(#b9d7f5, #9fbfe8); border-color: #4a6a90; }
.silver { background: linear-gradient(#e8ecec, #dadde3); border-color: #9a9aa2; }
.ctrl { background: linear-gradient(#e6effc 26%, #b9d2fd 27%, #e2ebfd); border-color: #6c94c8; }
.metro { border-color: #8ebc00; }
.gscroll { width: 14px; display: flex; flex-direction: column; flex: none; }
.gscroll button { height: 18px; display: grid; place-items: center; background: #ccc; border: 1px solid #999; }
.gscroll .on { border-color: #666; height: 19px; }

.work { flex: 1; min-height: 0; display: grid; grid-template-columns: 199px minmax(0, 1fr) 200px; gap: 5px; margin-top: 1px; padding: 5px 4px 5px 4px; border-top: 1px solid #444; }
.panel { display: flex; flex-direction: column; border: 1px solid #6c6c6c; min-height: 0; }
.head { height: 19px; flex: none; margin: 1px; border: 1px solid #c4c4c4; display: flex; align-items: flex-start; gap: 7px; color: #fff; }
.head h2 { flex: 1; font-size: 13px; font-weight: 400; line-height: 15px; }
.head svg { width: 10px; height: 12px; margin-top: 2px; }
.head svg:last-child { width: 12px; }
.left { display: flex; flex-direction: column; min-height: 0; }
.toolbox { flex: 1; }
.tbody { flex: 1; min-height: 0; border: 1px solid #555; margin-top: 1px; padding: 2px; display: flex; flex-direction: column; gap: 6px; }
.search { height: 20px; width: 100%; flex: none; border: 1px solid #666; background: #e2e2e2; padding: 4px 3px 0; line-height: 15px; }
.search::placeholder { color: #707070; opacity: 1; }
.treebox { flex: 1; min-height: 0; background: #e2e2e2; border: 1px solid #555; display: flex; flex-direction: column; justify-content: space-between; }
.tree li { height: 19px; display: flex; align-items: center; gap: 4px; padding: 0 0 2px 7px; white-space: nowrap; }
.tree svg { width: 16px; height: 16px; }
.tree .ar { width: 8px; height: 8px; margin-right: 7px; }
.toolbox .ar { margin-right: 2px; }
.toolbox .ar:last-child { margin-right: 5px; }
.tree .l1 { padding-left: 27px; }
.tree .l2 { padding-left: 41px; }
.tree .l3 { padding-left: 61px; }
.tree .sel { background: #f0ecd8; box-shadow: 0 -1px #dcab80 inset, 0 1px #dcab80 inset; }
.hscroll { height: 17px; display: flex; background: #b4b4b4; border-top: 1px solid #666; }
.hscroll button, .hscroll .thumb, .vscroll button, .vscroll .thumb { display: grid; place-items: center; background: linear-gradient(#a4a4a4, #8f8f8f); border: 1px solid #666; }
.hscroll button { width: 17px; }
.hscroll .thumb { width: 128px; margin-right: auto; }
.grip { height: 4px; width: 22px; margin: 0 auto; border-bottom: 1px dotted #8fb4d8; }
.names { height: 122px; flex: none; border: 1px solid #555; font-weight: 700; padding: 1px 6px; }

.center { display: flex; flex-direction: column; gap: 6px; min-height: 0; min-width: 0; }
.editor { flex: 1; min-height: 0; display: flex; flex-direction: column; border: 1px solid #6c6c6c; }
.doctabs { height: 26px; flex: none; background: #7d7d7d; display: flex; align-items: flex-end; padding-left: 11px; }
.dtab { position: relative; height: 24px; display: flex; align-items: center; white-space: nowrap; }
.dtab .shape { position: absolute; left: 0; top: 0; width: 100%; height: 24px; }
.dtab span, .dtab button { position: relative; }
.dtab button svg { width: 10px; height: 8px; }
.first { width: 238px; padding: 0 16px 0 21px; justify-content: space-between; font-weight: 700; z-index: 1; }
.second { width: 128px; margin-left: -4px; padding: 0 17px; color: #fff; justify-content: space-between; }
.dend { margin-left: auto; align-self: center; display: flex; gap: 7px; padding-right: 3px; }
.doc { flex: 1; min-height: 0; margin: 0 1px; border: 3px solid #e2e2e2; border-top-width: 1px; display: flex; }
.canvas { flex: 1; margin-bottom: 66px; background: #696969; position: relative; }
.node { position: absolute; left: 108px; top: 156px; width: 451px; height: 130px; padding: 4px 5px; background: #a9a9a9; border: 2px solid #4c4c4c; border-radius: 10px; font-size: 14px; text-align: center; color: #111; }
.ntext { line-height: 28px; }
.nstart { position: relative; height: 26px; line-height: 22px; text-align: left; padding-left: 4px; border: 2px solid #222; border-radius: 6px; margin-bottom: 2px; }
.port { position: absolute; right: -15px; top: 6px; width: 10px; height: 11px; border-radius: 50%; background: #000; }
.npath { width: 100%; height: 24px; line-height: 20px; border: 2px solid #e4e4e4; border-radius: 6px; font-size: 13px; }
.props { width: 288px; padding: 12px 13px 13px 7px; display: flex; }
fieldset { flex: 1; min-width: 0; border: 1px solid #6a6a6a; border-radius: 3px; padding: 0 4px 0 6px; }
legend { margin-left: 2px; padding: 0 4px; }
.grid { display: grid; grid-template-columns: 103px 1fr; row-gap: 5px; align-items: start; padding-top: 3px; line-height: 19px; }
.grid label { white-space: nowrap; }
.grid input[type="text"], .grid select { width: 100%; height: 20px; border: 1px solid #666; border-radius: 2px; background: #c8c8c8; padding: 0 3px; font-size: 11px; min-width: 0; }
.grid select { appearance: none; font-size: 13px; line-height: 18px; background: #e2e2e2 url("data:image/svg+xml,%3Csvg xmlns='http://www.w3.org/2000/svg' width='16' height='18'%3E%3Cpath d='M0 0h16v18H0z' fill='%23bbb'/%3E%3Cpath d='M.5 0v18' stroke='%23666'/%3E%3Cpath d='M4 7h8l-4 4z' fill='%23222'/%3E%3C/svg%3E") right no-repeat; }
.grid input[type="text"]:disabled { color: #777; border-color: #aaa; }
.pair { display: flex; gap: 4px; }
.pair button { width: 33px; flex: none; }
textarea { width: 100%; height: 70px; resize: none; border: 1px solid #666; background: #e2e2e2; font-size: 11px; line-height: 13px; padding: 3px 5px; display: block; }
.grid input[type="checkbox"] { margin: 1px 1px 6px; }
.props button { height: 20px; line-height: 18px; border: 1px solid #6c6c6c; border-radius: 2px; background: linear-gradient(#dcdcdc, #b4b4b4); }
.loc { line-height: 20px; margin-top: 8px; }
.props .add { width: 253px; height: 24px; margin: 9px 0 6px 1px; display: block; }
.file { display: flex; justify-content: space-between; width: 254px; padding-left: 3px; }
.file button { width: 13px; }

.log { height: 129px; flex: none; }
.logbody { flex: 1; min-height: 0; margin-top: 1px; border-top: 1px solid #555; background: #e2e2e2; display: flex; }
.logbody ul { flex: 1; min-width: 0; padding: 1px 3px 0 0; font: 14px/20px "Liberation Sans", Arial, sans-serif; }
.logbody li { padding-left: 4px; white-space: nowrap; overflow: hidden; }
.logbody .err { color: #f00; line-height: 18px; padding-left: 3px; border: 1px solid #dcab80; background: linear-gradient(#f2e6cc, #efe0b8 50%, #f2e8d0); }
.vscroll { width: 17px; display: flex; flex-direction: column; background: #b4b4b4; }
.vscroll button { height: 17px; }
.vscroll .thumb { height: 11px; margin-top: auto; }
.explorer .tree { flex: 1; background: #e2e2e2; border: 1px solid #555; margin-top: 1px; }

.taskbar { height: 50px; flex: none; display: flex; color: #fff; background: linear-gradient(90deg, #1f2440, #2b2947 26%, #29264a 60%, #1b2444 82%, #18203c); }
.start { width: 60px; display: grid; place-items: center; }
.tsearch { width: 430px; background: #f2f2f2; border: 1px solid #bbb; display: flex; align-items: center; gap: 13px; padding-left: 14px; }
.tsearch input { flex: 1; border: 0; background: none; font-size: 18px; padding: 0; }
.tsearch input::placeholder { color: #222; opacity: 1; }
.tv { width: 60px; display: grid; place-items: center; }
.apps { display: flex; gap: 2px; padding-left: 4px; }
.apps button { width: 60px; height: 50px; display: grid; place-items: center; position: relative; }
.apps svg { width: 30px; height: 30px; }
.apps .run::after { content: ""; position: absolute; left: 4px; right: 4px; bottom: 0; height: 3px; background: #76b9ed; }
.apps .stack::after { border-right: 10px solid #5b87b5; }
.apps .cur { background: #534f6c; }
.apps .cur::after { left: 0; right: 0; }
.tray { margin-left: auto; display: flex; align-items: center; }
.tray > svg { margin-right: 12px; }
.clock { display: flex; flex-direction: column; align-items: center; font-size: 14px; line-height: 23px; width: 68px; }
.notes { position: relative; margin: 0 20px 0 23px; width: 30px; height: 50px; }
.notes b { position: absolute; right: 0; bottom: 5px; width: 21px; height: 21px; line-height: 18px; border: 1px solid #888; border-radius: 50%; background: #333; font-weight: 400; font-size: 14px; }
```
